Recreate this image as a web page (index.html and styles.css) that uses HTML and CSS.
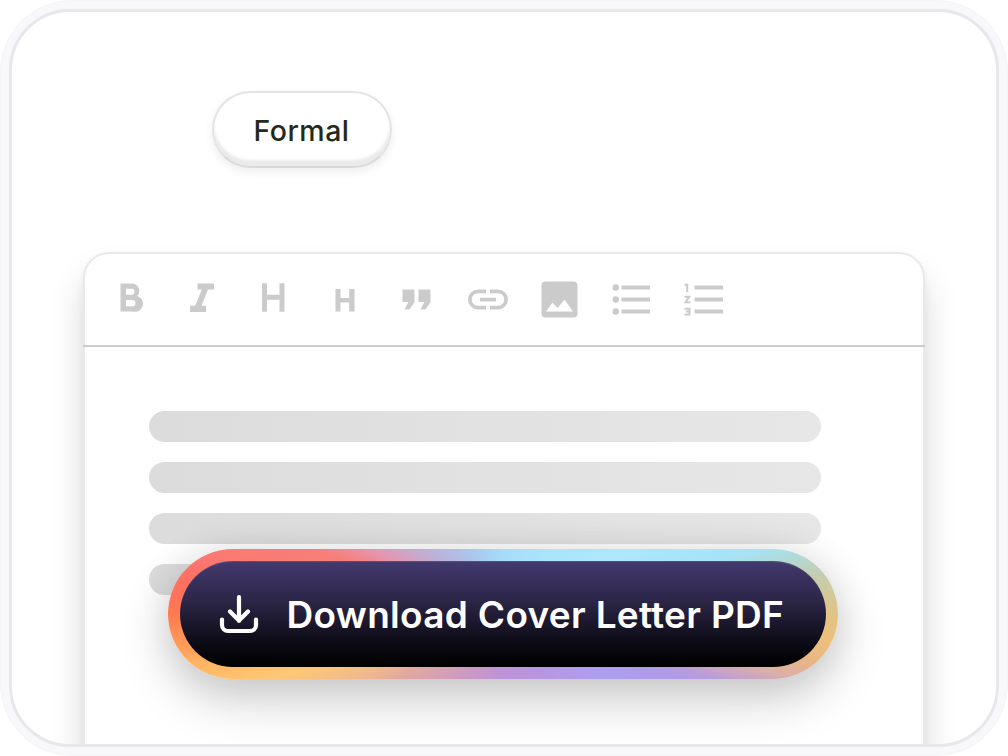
FILE: index.html
```
<!DOCTYPE html>
<html lang="en">
<head>
<meta charset="utf-8">
<title>Cover letter</title>
<link rel="stylesheet" href="styles.css">
</head>
<body>
<main class="frame">
  <div class="screen">
    <button class="tone">Formal</button>
    <section class="editor">
      <div class="toolbar">
        <svg viewBox="0 0 660 60" width="660" height="60" fill="currentColor">
          <path fill-rule="evenodd" d="M10.500 13.500H22a7.300 7.300 0 0 1 5.200 12.400a7.900 7.900 0 0 1-4.700 15.600H10.500ZM16 18.800V24.800H21.500a3 3 0 0 0 0-6ZM16 30V36.300H22.300a3.150 3.150 0 0 0 0-6.300Z"/>
          <path d="M87.500 13.500H104V19.500H98L91.500 35.800H96V42H80V35.800H85.200L91.800 19.500H87.500Z"/>
          <path d="M152 13.300h5v11.500H169.500V13.300h5v28.500h-5V29.700H157v12.100H152Z"/>
          <path d="M225.500 19h5v9h8.700v-9h5.300v22.500h-5.300v-9h-8.700v9h-5Z"/>
          <path d="M292.500 19.500H304.500V32L299.500 39.500H294.500L298.500 32H292.500ZM308.500 19.500H320.500V32L315.500 39.500H310.500L314.500 32H308.500Z"/>
          <path d="M376 19.500H368a10 10 0 0 0 0 20H376V35.800H368a6.300 6.300 0 0 1 0-12.600H376ZM380 19.500h8a10 10 0 0 1 0 20h-8v-3.700h8a6.300 6.300 0 0 0 0-12.600h-8ZM370 27.700h16v3.800h-16Z"/>
          <path fill-rule="evenodd" d="M435.500 11.500H463.500a4 4 0 0 1 4 4v28a4 4 0 0 1-4 4H435.500a4 4 0 0 1-4-4v-28a4 4 0 0 1 4-4ZM436 41.500H463L454.500 29.500L447.500 38L442.500 32.500Z"/>
          <circle cx="505.800" cy="17.500" r="3.200"/><circle cx="505.800" cy="29.500" r="3.200"/><circle cx="505.800" cy="41.500" r="3.200"/>
          <path d="M511.500 15.500h28.500v4h-28.500zM511.500 27.500h28.500v4h-28.500zM511.500 39.500h28.500v4h-28.500zM584.500 15.500H613v4H584.500zM584.500 27.500H613v4H584.500zM584.500 39.500H613v4H584.500z"/>
          <path fill="none" stroke="currentColor" stroke-width="2" d="M574.500 14.800h2.700v7.200M574.500 26.700h4.800L575.500 32.300h5M574.500 38.700h5v5.800h-5M576 41.600h3.500"/>
        </svg>
      </div>
      <div class="lines"><i></i><i></i><i></i><i class="short"></i></div>
    </section>
    <button class="download">
      <span class="download-face">
        <svg viewBox="0 0 40 40" width="40" height="40" fill="none" stroke="#fff" stroke-width="4.200" stroke-linecap="round" stroke-linejoin="round"><path d="M20 3V27M11 17.500L20 26.500L29 17.500M3 25.500V31a6 6 0 0 0 6 6H31a6 6 0 0 0 6-6V25.500"/></svg>
        <span class="label">Download Cover Le<span class="pair">t</span>ter PDF</span>
      </span>
    </button>
  </div>
</main>
</body>
</html>
```
FILE: styles.css
```
* { box-sizing: border-box; }
body { margin: 0; background: #fff; font-family: Inter, "Liberation Sans", sans-serif; }
button { border: 0; padding: 0; font-family: inherit; }
.frame {
  width: 1008px; height: 756px; padding: 8px;
  border: 1px solid #f5f5f8; border-radius: 72px; background: #f8f8fb;
}
.screen {
  position: relative; width: 990px; height: 738px; overflow: hidden;
  border: 3px solid #e7e7ec; border-radius: 61px; background: #fff;
  padding: 79px 70px 0 71px;
}
.tone {
  display: flex; align-items: center; justify-content: center;
  width: 180px; height: 77px; margin-left: 128.500px; padding-top: 2px;
  border: 2px solid #e4e4e4; border-bottom-color: #d9d9d9; border-radius: 39px; background: #fff;
  box-shadow: inset 0 -6px 3px #ebebeb, 0 4px 10px rgba(0,0,0,.07);
  color: #25291a; font-size: 28.500px; font-weight: 500; letter-spacing: .5px;
}
.editor {
  width: 842px; height: 530px; margin-top: 84px;
  border: 2px solid #e9e9e9; border-radius: 26px 26px 0 0; background: #fff;
  box-shadow: 0 24px 34px rgba(0,0,0,.15), 0 4px 10px rgba(0,0,0,.04);
}
.toolbar {
  height: 93px; margin: 0 -2px; padding: 16px 0 0 27px;
  border-bottom: 2px solid #cbcbcb; color: #cbcbcb;
}
.toolbar svg { display: block; }
.lines { display: flex; flex-direction: column; gap: 20.500px; padding: 64px 0 0 63.500px; }
.lines i { width: 672.500px; height: 30.500px; border-radius: 16px; background: linear-gradient(90deg, #dcdcdc, #e7e7e7); }
.lines .short { width: 300px; }
.download {
  position: absolute; left: 156px; top: 537px; width: 670px; height: 130px;
  padding: 12px; border-radius: 65px;
  background: conic-gradient(#a7dcf9 0deg, #a7defa 7deg, #ade8fc 63deg, #a8e2f6 76deg, #aedce0 78.200deg, #c5cdb0 83deg, #e0c485 90deg, #ecbf7b 94.600deg, #e8b686 98.700deg, #dcb0a8 102deg, #cda6c0 104deg, #b99ddb 106.700deg, #ae9bea 110.600deg, #ae9eee 121deg, #b796e2 148deg, #be94d6 183deg, #cb98c4 209deg, #d6a0b4 227deg, #e0a89f 237.600deg, #ecb592 244.400deg, #f6c181 251deg, #fdc877 254.500deg, #ffc06b 257.300deg, #ffb163 261.400deg, #ff9b57 264.500deg, #ff7a52 270deg, #ff6f62 276deg, #fb7871 280.300deg, #f97c74 284deg, #f67f7b 289deg, #e595ad 295.600deg, #cda5c8 302.400deg, #b8b4dc 313deg, #a8cdf0 338.700deg, #a7dcf9 360deg);
  box-shadow: 0 20px 50px rgba(0,0,0,.2), 0 0 40px rgba(0,0,0,.08);
}
.download-face {
  display: flex; align-items: center; gap: 28px; height: 106px; padding-left: 38.500px;
  border-radius: 53px; background: linear-gradient(#43396f, #2a2444 40%, #0e0c17 75%, #000);
  box-shadow: inset 0 1px 1px rgba(255,255,255,.12);
}
.label { color: #fff; font-size: 37px; font-weight: 600; line-height: 1; letter-spacing: .3px; white-space: nowrap; }
.pair { letter-spacing: -1px; }
```
